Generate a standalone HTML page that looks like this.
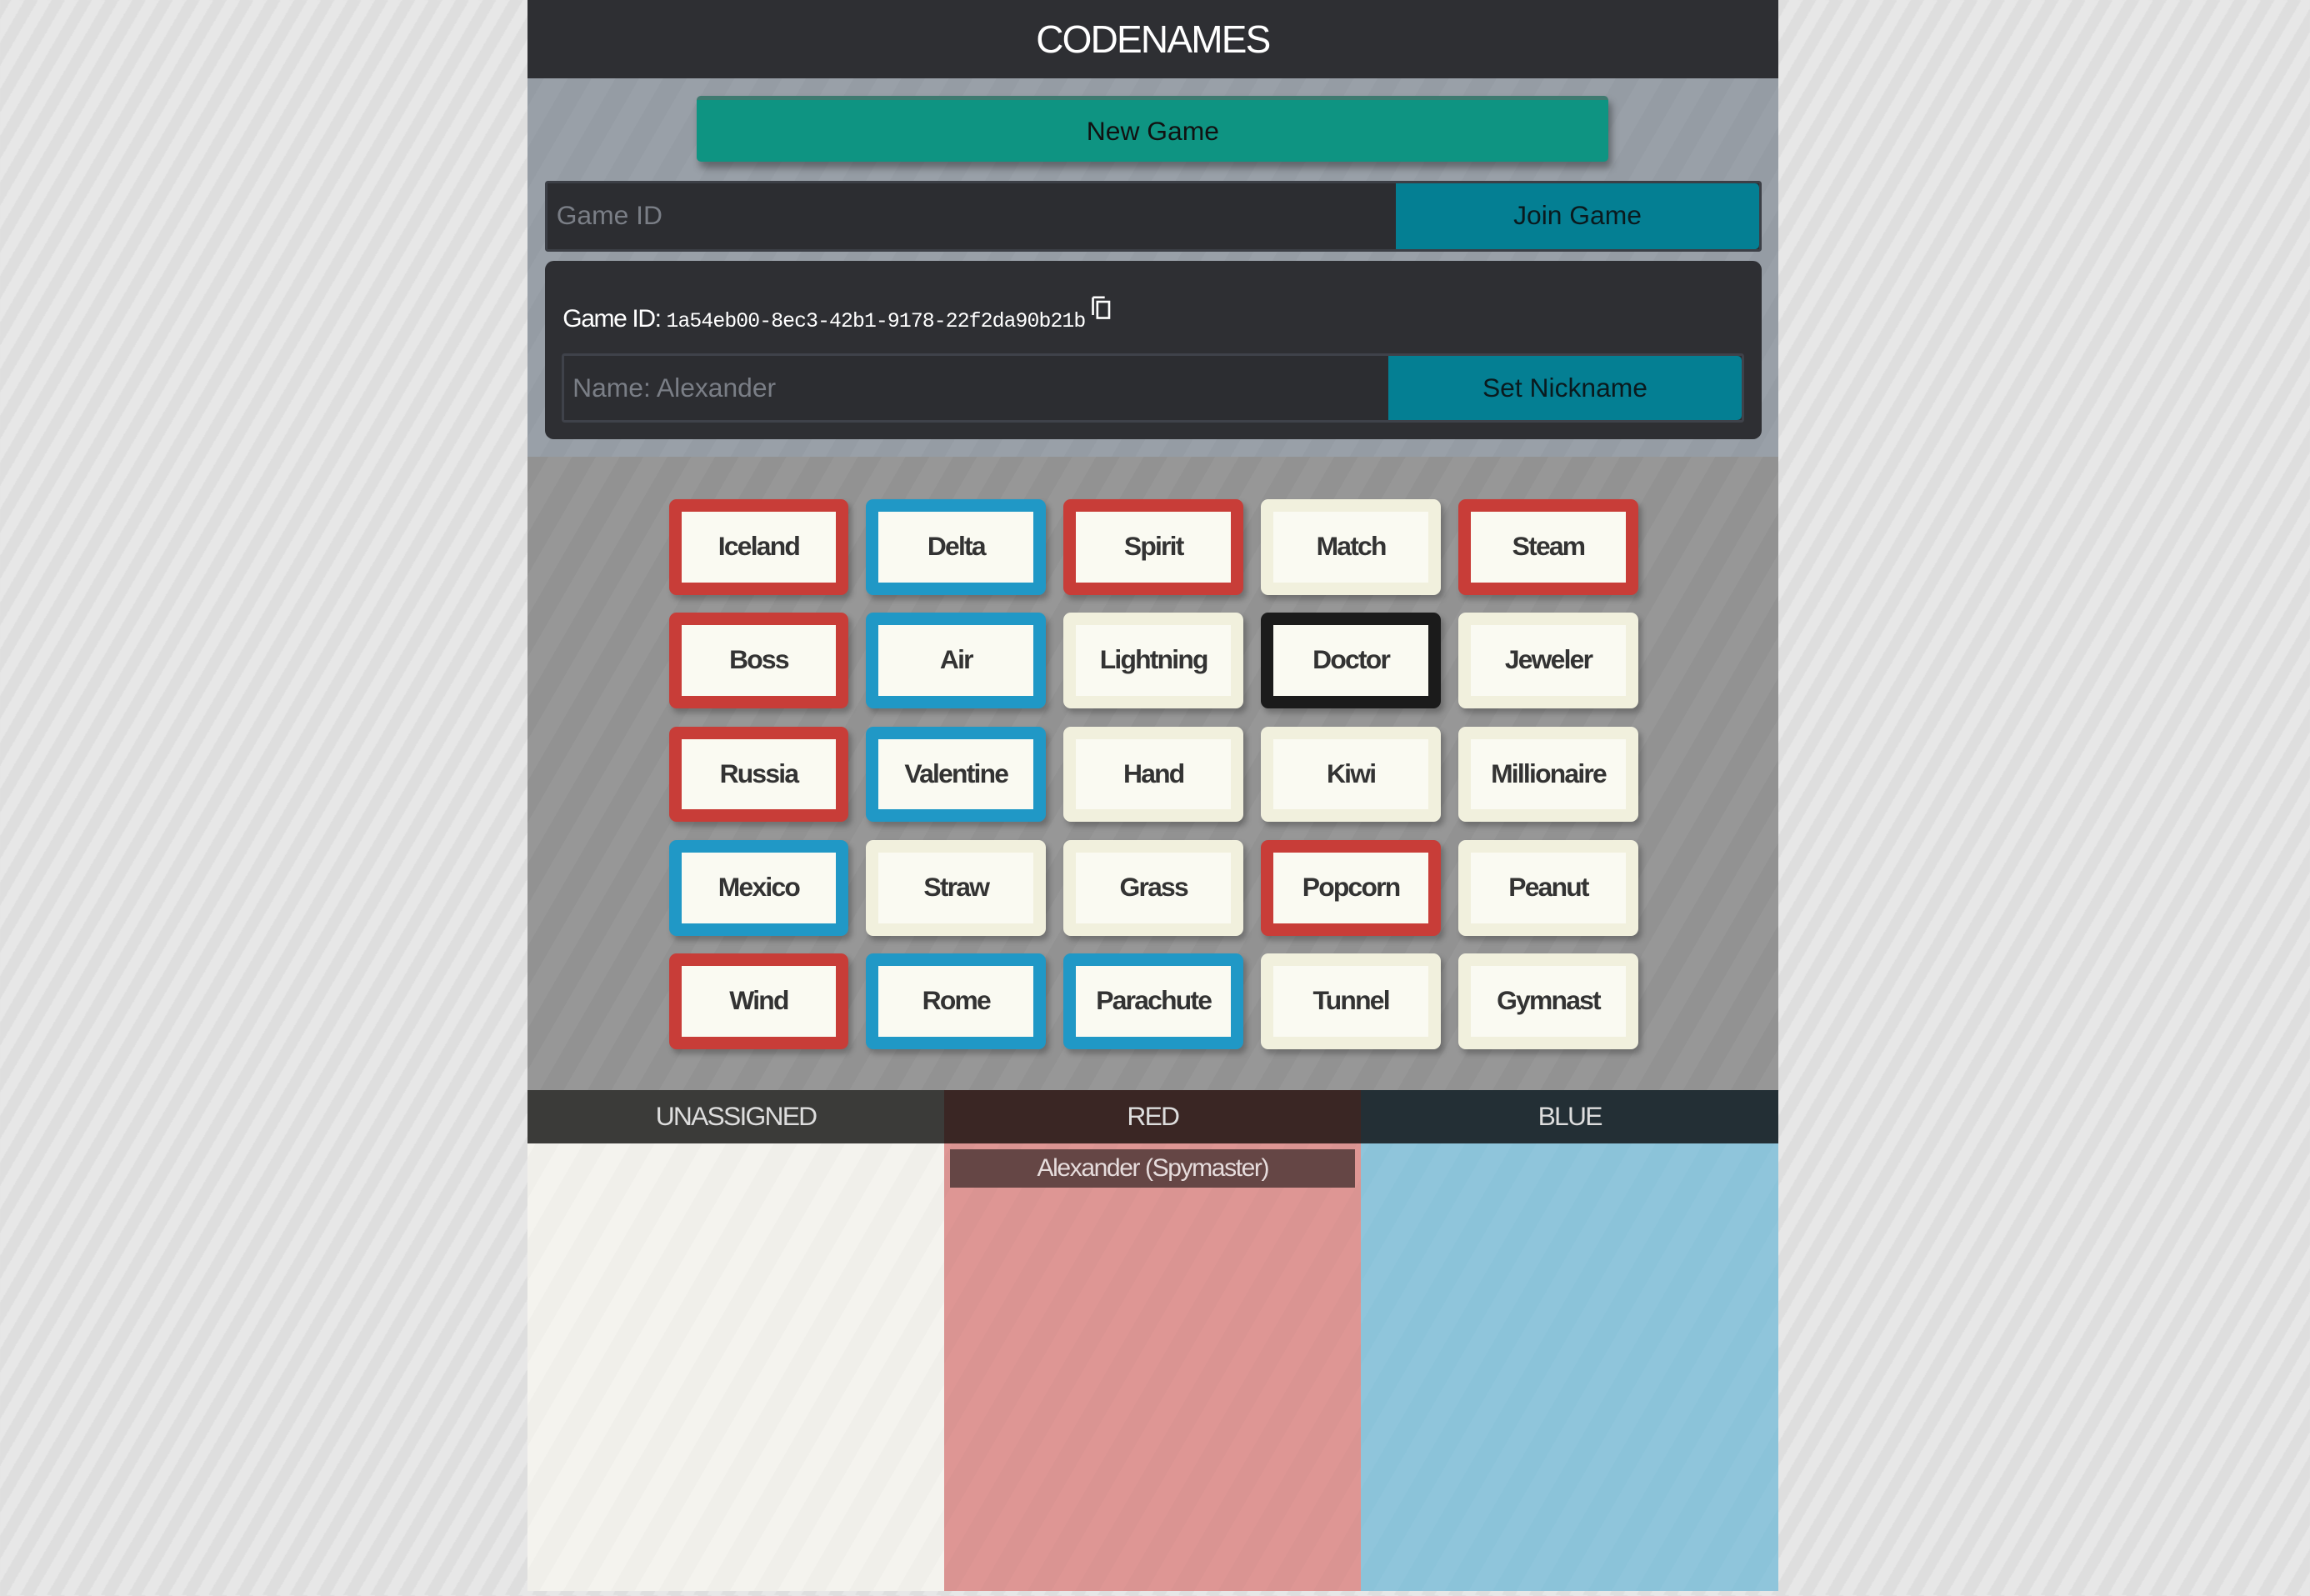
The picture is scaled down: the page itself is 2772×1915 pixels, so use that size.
<!DOCTYPE html>
<html><head><meta charset="utf-8"><style>
html,body{margin:0;padding:0;}
body{width:2772px;height:1914px;overflow:hidden;background:#e4e4e4 repeating-linear-gradient(-60deg,#e7e7e7 0 14px,#dedede 14px 28px);font-family:"Liberation Sans",sans-serif;}
#z{zoom:1.76786;width:1568px;height:1083px;position:relative;}
.c{position:absolute;left:358px;width:849px;top:0;height:1080px;}
.hd{height:53px;background:#2e2f33;color:#fff;font-size:26px;text-align:center;line-height:54px;letter-spacing:-1px;}
.top{position:absolute;top:53px;left:0;width:849px;height:257px;background:#979ea6 repeating-linear-gradient(-60deg,#99a0a8 0 14px,#959ca4 14px 28px);}
.ng{position:absolute;left:115px;top:12px;width:619px;height:45px;background:#0e9482;border-top:3px solid #3f7a70;border-radius:3px;box-shadow:2px 4px 5px rgba(0,0,0,.35);text-align:center;line-height:42px;font-size:18px;color:#111;box-sizing:border-box;}
.row{position:absolute;border:2px solid #3c3f46;background:#2c2d31;box-sizing:border-box;border-radius:2px;}
.row .ph{position:absolute;left:6px;top:0;line-height:44px;font-size:18px;color:#7a7e86;}
.row .bt{position:absolute;right:0;top:0;bottom:0;background:#047f93;color:#0a1a1e;font-size:18px;text-align:center;line-height:44px;border-radius:0 3px 3px 0;}
.info{position:absolute;left:12px;top:124px;width:826px;height:121px;background:#2e2f33;border-radius:6px;}
.gid{position:absolute;left:12px;top:24px;color:#fff;font-size:17px;letter-spacing:-.8px;}
.gid span{font-family:"Liberation Mono",monospace;font-size:14px;letter-spacing:-.5px;}
.board{position:absolute;top:310px;left:0;width:849px;height:430px;background:#959595 repeating-linear-gradient(-60deg,#979797 0 14px,#929292 14px 28px);}
.card{position:absolute;width:122px;height:65px;box-sizing:border-box;border:9px solid;border-radius:5px;background:#fafaf2;box-shadow:2px 3px 4px rgba(0,0,0,.25);text-align:center;line-height:47px;font-weight:bold;font-size:18px;color:#333;letter-spacing:-1px;}
.r{border-color:#c83d38}.b{border-color:#2098c6}.n{border-color:#f1f0dd}.k{border-color:#1b1b1b}
.th{position:absolute;top:740px;height:36px;width:283px;color:#ddd;font-size:18px;text-align:center;line-height:36px;letter-spacing:-1px;}
.col{position:absolute;top:776px;height:304px;width:283px;}
</style></head><body><div id="z"><div class="c">
<div class="hd">CODENAMES</div>
<div class="top">
<div class="ng">New Game</div>
<div class="row" style="left:12px;top:70px;width:826px;height:48px;"><div class="ph">Game ID</div><div class="bt" style="width:247px;">Join Game</div></div>
<div class="info">
<div class="gid">Game ID: <span>1a54eb00-8ec3-42b1-9178-22f2da90b21b</span><svg width="16" height="18" viewBox="0 0 16 18" style="vertical-align:3px;margin-left:3px"><path d="M2 1h8M2 1v12" stroke="#fff" stroke-width="1.5" fill="none"/><rect x="5" y="4" width="8" height="11" stroke="#fff" stroke-width="1.5" fill="none"/></svg></div>
<div class="row" style="left:11px;top:63px;width:803px;height:47px;border-color:#3f424a;"><div class="ph">Name: Alexander</div><div class="bt" style="width:240px;">Set Nickname</div></div>
</div>
</div>
<div class="board">
<div class="card r" style="left:96px;top:29px">Iceland</div>
<div class="card b" style="left:230px;top:29px">Delta</div>
<div class="card r" style="left:364px;top:29px">Spirit</div>
<div class="card n" style="left:498px;top:29px">Match</div>
<div class="card r" style="left:632px;top:29px">Steam</div>
<div class="card r" style="left:96px;top:106px">Boss</div>
<div class="card b" style="left:230px;top:106px">Air</div>
<div class="card n" style="left:364px;top:106px">Lightning</div>
<div class="card k" style="left:498px;top:106px">Doctor</div>
<div class="card n" style="left:632px;top:106px">Jeweler</div>
<div class="card r" style="left:96px;top:183px">Russia</div>
<div class="card b" style="left:230px;top:183px">Valentine</div>
<div class="card n" style="left:364px;top:183px">Hand</div>
<div class="card n" style="left:498px;top:183px">Kiwi</div>
<div class="card n" style="left:632px;top:183px">Millionaire</div>
<div class="card b" style="left:96px;top:260px">Mexico</div>
<div class="card n" style="left:230px;top:260px">Straw</div>
<div class="card n" style="left:364px;top:260px">Grass</div>
<div class="card r" style="left:498px;top:260px">Popcorn</div>
<div class="card n" style="left:632px;top:260px">Peanut</div>
<div class="card r" style="left:96px;top:337px">Wind</div>
<div class="card b" style="left:230px;top:337px">Rome</div>
<div class="card b" style="left:364px;top:337px">Parachute</div>
<div class="card n" style="left:498px;top:337px">Tunnel</div>
<div class="card n" style="left:632px;top:337px">Gymnast</div>
</div>
<div class="th" style="left:0;background:#3b3b39">UNASSIGNED</div>
<div class="th" style="left:283px;background:#3a2624">RED</div>
<div class="th" style="left:566px;width:283px;background:#232f35">BLUE</div>
<div class="col" style="left:0;background:#f2f1ec repeating-linear-gradient(-60deg,#f4f3ee 0 14px,#f0efea 14px 28px)"></div>
<div class="col" style="left:283px;background:#dc9593 repeating-linear-gradient(-60deg,#de9694 0 14px,#da9492 14px 28px)">
<div style="margin:4px 4px 0 4px;height:26px;background:#654645;color:#e6dcdc;font-size:17px;text-align:center;line-height:26px;letter-spacing:-.8px;">Alexander (Spymaster)</div></div>
<div class="col" style="left:566px;background:#8dc4da repeating-linear-gradient(-60deg,#8fc5db 0 14px,#8bc3d9 14px 28px)"></div>
</div></div></body></html>
